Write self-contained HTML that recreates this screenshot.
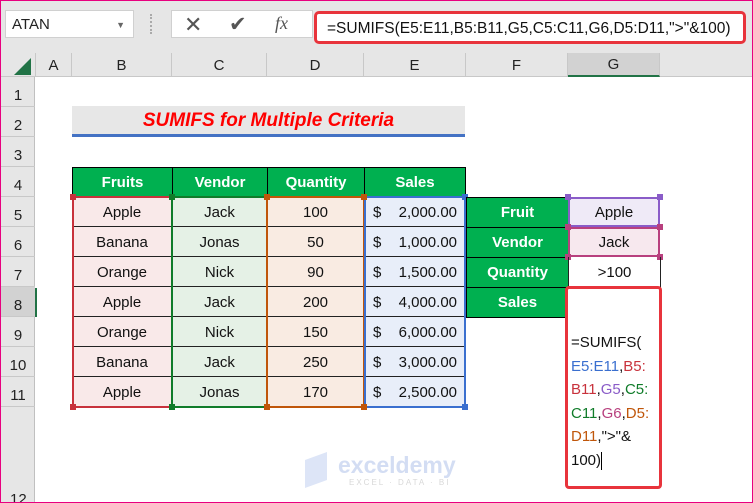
<!DOCTYPE html>
<html style="overflow:hidden;width:753px;height:503px"><head><meta charset="utf-8"><style>
*{margin:0;padding:0;box-sizing:border-box}
body{width:753px;height:503px;overflow:hidden;background:#fff;font-family:"Liberation Sans",sans-serif;position:relative}
.a{position:absolute}
.c{position:absolute;display:flex;align-items:center;justify-content:center;font-size:15px;color:#111}
.h{background:#00b050;color:#fff;font-weight:bold;border:1px solid #000}
.rh{position:absolute;left:1px;width:34px;text-align:center;font-size:15px;color:#222;border-bottom:1px solid #c8c8c8;display:flex;align-items:center;justify-content:center;padding-top:8px}
.ch{position:absolute;top:53px;height:24px;font-size:15px;color:#222;display:flex;align-items:center;justify-content:center;border-right:1px solid #c8c8c8}
.row{border-bottom:1px solid #222}
.hd{position:absolute;width:6px;height:6px}
</style></head><body>
<div class="a" style="left:0;top:0;width:753px;height:503px;border:1px solid #e8007f;z-index:20;pointer-events:none"></div>
<div class="a" style="left:0;top:0;width:753px;height:53px;background:#e6e6e6"></div>
<div class="a" style="left:5px;top:10px;width:129px;height:28px;background:#fff;border:1px solid #d0d0d0;font-size:15px;padding:5px 6px;color:#222">ATAN<span style="position:absolute;right:8px;top:9px;font-size:9px;color:#666">▼</span></div>
<div class="a" style="left:150px;top:14px;width:3px;height:20px;border-left:2px dotted #aaa"></div>
<div class="a" style="left:171px;top:10px;width:142px;height:28px;background:#fff;border:1px solid #d0d0d0"></div>
<div class="a" style="left:184px;top:12px;font-size:22px;color:#555">✕</div>
<div class="a" style="left:229px;top:12px;font-size:21px;color:#555">✔</div>
<div class="a" style="left:275px;top:13px;font-size:18px;color:#555;font-family:'Liberation Serif',serif;font-style:italic">fx</div>
<div class="a" style="left:314px;top:11px;width:432px;height:33px;background:#fff;border:3px solid #e8343c;border-radius:5px;font-size:15.5px;padding:6px 0 0 10px;color:#111;white-space:nowrap">=SUMIFS(E5:E11,B5:B11,G5,C5:C11,G6,D5:D11,"&gt;"&amp;100)</div>
<div class="a" style="left:0;top:53px;width:753px;height:24px;background:#e6e6e6;border-bottom:1px solid #c8c8c8"></div>
<div class="a" style="left:14px;top:58px;width:0;height:0;border-left:17px solid transparent;border-bottom:17px solid #217346"></div>
<div class="ch" style="left:35px;width:37px;border-left:1px solid #c8c8c8">A</div>
<div class="ch" style="left:72px;width:100px">B</div>
<div class="ch" style="left:172px;width:95px">C</div>
<div class="ch" style="left:267px;width:97px">D</div>
<div class="ch" style="left:364px;width:102px">E</div>
<div class="ch" style="left:466px;width:102px">F</div>
<div class="ch" style="left:568px;width:92px;background:#d2d2d2;border-bottom:2px solid #217346">G</div>
<div class="a" style="left:0;top:77px;width:35px;height:426px;background:#e6e6e6;border-right:1px solid #c0c0c0"></div>
<div class="rh" style="top:77px;height:30px">1</div>
<div class="rh" style="top:107px;height:30px">2</div>
<div class="rh" style="top:137px;height:30px">3</div>
<div class="rh" style="top:167px;height:30px">4</div>
<div class="rh" style="top:197px;height:30px">5</div>
<div class="rh" style="top:227px;height:30px">6</div>
<div class="rh" style="top:257px;height:30px">7</div>
<div class="rh" style="top:287px;height:30px;background:#d2d2d2">8</div>
<div class="rh" style="top:317px;height:30px">9</div>
<div class="rh" style="top:347px;height:30px">10</div>
<div class="rh" style="top:377px;height:30px">11</div>
<div class="a" style="left:10px;top:492px;font-size:15px;color:#222;line-height:15px">12</div>
<div class="a" style="left:35px;top:288px;width:2px;height:29px;background:#217346"></div>
<div class="a" style="left:72px;top:106px;width:393px;height:31px;background:#e7e7e7;border-bottom:3px solid #4472c4;color:#f00;font-weight:bold;font-style:italic;font-size:19px;text-align:center;padding-top:4px">SUMIFS for Multiple Criteria</div>
<div class="c h" style="left:72px;top:167px;width:101px;height:31px">Fruits</div>
<div class="c h" style="left:172px;top:167px;width:96px;height:31px">Vendor</div>
<div class="c h" style="left:267px;top:167px;width:98px;height:31px">Quantity</div>
<div class="c h" style="left:364px;top:167px;width:102px;height:31px">Sales</div>
<div class="a" style="left:73px;top:198px;width:99px;height:210px;background:#f9e9e9"></div>
<div class="a" style="left:173px;top:198px;width:94px;height:210px;background:#e5f1e6"></div>
<div class="a" style="left:268px;top:198px;width:96px;height:210px;background:#f9ebe2"></div>
<div class="a" style="left:365px;top:198px;width:100px;height:210px;background:#e8eef9"></div>
<div class="a row" style="left:72px;top:197px;width:394px;height:30px"></div>
<div class="a row" style="left:72px;top:227px;width:394px;height:30px"></div>
<div class="a row" style="left:72px;top:257px;width:394px;height:30px"></div>
<div class="a row" style="left:72px;top:287px;width:394px;height:30px"></div>
<div class="a row" style="left:72px;top:317px;width:394px;height:30px"></div>
<div class="a row" style="left:72px;top:347px;width:394px;height:30px"></div>
<div class="a" style="left:72px;top:196px;width:101px;height:212px;border:2px solid #c8323c"></div>
<div class="a" style="left:171px;top:196px;width:97px;height:212px;border:2px solid #107c2a"></div>
<div class="a" style="left:266px;top:196px;width:99px;height:212px;border:2px solid #c0560a"></div>
<div class="a" style="left:364px;top:196px;width:102px;height:212px;border:2px solid #3a6fcf"></div>
<div class="hd" style="left:70px;top:194px;background:#c8323c"></div><div class="hd" style="left:70px;top:404px;background:#c8323c"></div>
<div class="hd" style="left:169px;top:194px;background:#107c2a"></div><div class="hd" style="left:169px;top:404px;background:#107c2a"></div>
<div class="hd" style="left:264px;top:194px;background:#c0560a"></div><div class="hd" style="left:264px;top:404px;background:#c0560a"></div>
<div class="hd" style="left:361px;top:194px;background:#c0560a"></div><div class="hd" style="left:361px;top:404px;background:#c0560a"></div>
<div class="hd" style="left:462px;top:194px;background:#3a6fcf"></div><div class="hd" style="left:462px;top:404px;background:#3a6fcf"></div>
<div class="c" style="left:72px;top:197px;width:100px;height:30px">Apple</div>
<div class="c" style="left:72px;top:227px;width:100px;height:30px">Banana</div>
<div class="c" style="left:72px;top:257px;width:100px;height:30px">Orange</div>
<div class="c" style="left:72px;top:287px;width:100px;height:30px">Apple</div>
<div class="c" style="left:72px;top:317px;width:100px;height:30px">Orange</div>
<div class="c" style="left:72px;top:347px;width:100px;height:30px">Banana</div>
<div class="c" style="left:72px;top:377px;width:100px;height:30px">Apple</div>
<div class="c" style="left:172px;top:197px;width:95px;height:30px">Jack</div>
<div class="c" style="left:172px;top:227px;width:95px;height:30px">Jonas</div>
<div class="c" style="left:172px;top:257px;width:95px;height:30px">Nick</div>
<div class="c" style="left:172px;top:287px;width:95px;height:30px">Jack</div>
<div class="c" style="left:172px;top:317px;width:95px;height:30px">Nick</div>
<div class="c" style="left:172px;top:347px;width:95px;height:30px">Jack</div>
<div class="c" style="left:172px;top:377px;width:95px;height:30px">Jonas</div>
<div class="c" style="left:267px;top:197px;width:97px;height:30px">100</div>
<div class="c" style="left:267px;top:227px;width:97px;height:30px">50</div>
<div class="c" style="left:267px;top:257px;width:97px;height:30px">90</div>
<div class="c" style="left:267px;top:287px;width:97px;height:30px">200</div>
<div class="c" style="left:267px;top:317px;width:97px;height:30px">150</div>
<div class="c" style="left:267px;top:347px;width:97px;height:30px">250</div>
<div class="c" style="left:267px;top:377px;width:97px;height:30px">170</div>
<div class="c" style="left:364px;top:197px;width:102px;height:30px;justify-content:space-between;padding:0 9px"><span>$</span><span>2,000.00</span></div>
<div class="c" style="left:364px;top:227px;width:102px;height:30px;justify-content:space-between;padding:0 9px"><span>$</span><span>1,000.00</span></div>
<div class="c" style="left:364px;top:257px;width:102px;height:30px;justify-content:space-between;padding:0 9px"><span>$</span><span>1,500.00</span></div>
<div class="c" style="left:364px;top:287px;width:102px;height:30px;justify-content:space-between;padding:0 9px"><span>$</span><span>4,000.00</span></div>
<div class="c" style="left:364px;top:317px;width:102px;height:30px;justify-content:space-between;padding:0 9px"><span>$</span><span>6,000.00</span></div>
<div class="c" style="left:364px;top:347px;width:102px;height:30px;justify-content:space-between;padding:0 9px"><span>$</span><span>3,000.00</span></div>
<div class="c" style="left:364px;top:377px;width:102px;height:30px;justify-content:space-between;padding:0 9px"><span>$</span><span>2,500.00</span></div>
<div class="c h" style="left:466px;top:197px;width:103px;height:31px">Fruit</div>
<div class="c h" style="left:466px;top:227px;width:103px;height:31px">Vendor</div>
<div class="c h" style="left:466px;top:257px;width:103px;height:31px">Quantity</div>
<div class="c h" style="left:466px;top:287px;width:103px;height:31px">Sales</div>
<div class="c" style="left:568px;top:197px;width:92px;height:30px;background:#efeaf7;border:2px solid #8a5cc8">Apple</div>
<div class="c" style="left:568px;top:227px;width:92px;height:30px;background:#f7e8ee;border:2px solid #b8407e">Jack</div>
<div class="hd" style="left:565px;top:194px;background:#8a5cc8"></div><div class="hd" style="left:657px;top:194px;background:#8a5cc8"></div>
<div class="hd" style="left:565px;top:224px;background:#b8407e"></div><div class="hd" style="left:657px;top:224px;background:#b8407e"></div>
<div class="hd" style="left:565px;top:254px;background:#b8407e"></div><div class="hd" style="left:657px;top:254px;background:#b8407e"></div>
<div class="c" style="left:568px;top:257px;width:93px;height:31px;border:1px solid #222;border-top:none">&gt;100</div>
<div class="a" style="left:565px;top:286px;width:97px;height:203px;background:#fff;border:3px solid #e8343c;border-radius:4px;font-size:15px;line-height:23.5px;padding:42px 0 0 3px;color:#111;white-space:nowrap">=SUMIFS(<br><span style="color:#3a6fcf">E5:E11</span>,<span style="color:#c8323c">B5:</span><br><span style="color:#c8323c">B11</span>,<span style="color:#8a5cc8">G5</span>,<span style="color:#107c2a">C5:</span><br><span style="color:#107c2a">C11</span>,<span style="color:#b8407e">G6</span>,<span style="color:#c0560a">D5:</span><br><span style="color:#c0560a">D11</span>,"&gt;"&amp;<br>100)<span style="display:inline-block;width:1px;height:18px;background:#000;vertical-align:middle"></span></div>
<div class="a" style="left:305px;top:456px;width:22px;height:28px;background:#d4dff5;transform:skewY(-20deg);opacity:.8"></div>
<div class="a" style="left:338px;top:452px;font-size:23px;font-weight:bold;color:#d3ddf3">exceldemy</div>
<div class="a" style="left:349px;top:478px;font-size:8px;letter-spacing:2px;color:#d8d8d8">EXCEL · DATA · BI</div>
</body></html>
